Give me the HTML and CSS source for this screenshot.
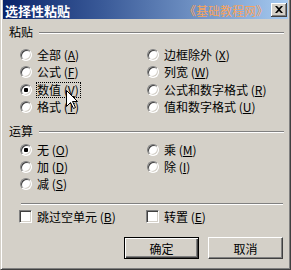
FILE: index.html
```html
<!DOCTYPE html>
<html lang="zh-CN">
<head>
<meta charset="utf-8">
<title>选择性粘贴</title>
<link rel="stylesheet" href="styles.css">
</head>
<body>
<div class="window">
  <div class="titlebar">
    <span class="title">选择性粘贴</span>
    <span class="brand">《基础教程网》</span>
    <span class="close">
      <svg width="8" height="7" viewBox="0 0 8 7"><path d="M0 0h2l2 2 2-2h2L5 3.5 8 7H6L4 5 2 7H0l3-3.5z" fill="#000"/></svg>
    </span>
  </div>
  <div class="body">
    <div class="group-head"><span>粘贴</span><i class="etch"></i></div>
    <div class="opts paste">
      <div class="opt"><span class="radio"></span><span class="lbl">全部 (<u>A</u>)</span></div>
      <div class="opt"><span class="radio"></span><span class="lbl">边框除外 (<u>X</u>)</span></div>
      <div class="opt"><span class="radio"></span><span class="lbl">公式 (<u>F</u>)</span></div>
      <div class="opt"><span class="radio"></span><span class="lbl">列宽 (<u>W</u>)</span></div>
      <div class="opt"><span class="radio checked"></span><span class="lbl focus">数值 (<u>V</u>)</span></div>
      <div class="opt"><span class="radio"></span><span class="lbl">公式和数字格式 (<u>R</u>)</span></div>
      <div class="opt"><span class="radio"></span><span class="lbl">格式 (<u>T</u>)</span></div>
      <div class="opt"><span class="radio"></span><span class="lbl">值和数字格式 (<u>U</u>)</span></div>
    </div>
    <div class="group-head second"><span>运算</span><i class="etch"></i></div>
    <div class="opts ops">
      <div class="opt"><span class="radio checked"></span><span class="lbl">无 (<u>O</u>)</span></div>
      <div class="opt"><span class="radio"></span><span class="lbl">乘 (<u>M</u>)</span></div>
      <div class="opt"><span class="radio"></span><span class="lbl">加 (<u>D</u>)</span></div>
      <div class="opt"><span class="radio"></span><span class="lbl">除 (<u>I</u>)</span></div>
      <div class="opt"><span class="radio"></span><span class="lbl">减 (<u>S</u>)</span></div>
    </div>
    <div class="rule"></div>
    <div class="checks">
      <div class="opt chk"><span class="checkbox"></span><span class="lbl">跳过空单元 (<u>B</u>)</span></div>
      <div class="opt chk"><span class="checkbox"></span><span class="lbl">转置 (<u>E</u>)</span></div>
    </div>
    <div class="buttons">
      <button class="btn default">确定</button>
      <button class="btn">取消</button>
    </div>
  </div>
  <svg class="cursor" width="12" height="19" viewBox="0 0 12 19"><polygon points="0.5,0.5 0.5,16.5 4.5,12.5 7.5,18.5 9.5,17.5 6.5,11.5 11.5,11.5" fill="#fff" stroke="#000" stroke-width="1"/></svg>
</div>
</body>
</html>
```

FILE: styles.css
```css
* { box-sizing: border-box; }
html, body { margin: 0; padding: 0; }
body {
  width: 291px;
  height: 270px;
  overflow: hidden;
  background: #d4d0c8;
  font-family: "Noto Sans CJK SC", "Noto Sans", sans-serif;
  font-size: 12px;
  color: #000;
}
.window {
  position: relative;
  width: 291px;
  height: 270px;
  background: #d4d0c8;
  border-style: solid;
  border-width: 0 1px 1px 1px;
  border-color: #d4d0c8 #404040 #404040 #d4d0c8;
  box-shadow: inset 1px 0 #fff, inset -1px -1px #808080;
  padding: 0 2px 2px 2px;
  display: flex;
  flex-direction: column;
}
.titlebar {
  height: 19px;
  flex: none;
  display: flex;
  align-items: center;
  background: linear-gradient(to right, #0a246a 0%, #3a5a98 35%, #a6caf0 100%);
}
.title {
  color: #fff;
  font-weight: bold;
  font-size: 13px;
  line-height: 15px;
  padding-left: 2px;
  margin-top: 2px;
}
.brand {
  margin-left: auto;
  margin-right: 3px;
  margin-top: 2px;
  color: #f7a35c;
  font-size: 12px;
  line-height: 14px;
}
.close {
  align-self: flex-start;
  margin-top: 3px;
  margin-right: 1px;
  width: 16px;
  height: 14px;
  background: #d4d0c8;
  box-shadow: inset -1px -1px #404040, inset 1px 1px #fff, inset -2px -2px #808080;
  display: flex;
  align-items: center;
  justify-content: center;
  padding-bottom: 1px;
}
.close svg { display: block; }
.body {
  flex: 1;
  display: flex;
  flex-direction: column;
}
.group-head {
  display: flex;
  align-items: center;
  height: 14px;
  margin-top: 6px;
  padding-left: 6px;
}
.group-head.second { margin-top: 8px; }
.group-head span { line-height: 14px; }
.etch {
  flex: 1;
  height: 2px;
  border-top: 1px solid #808080;
  border-bottom: 1px solid #fff;
  margin-left: 6px;
  margin-right: 4px;
  margin-top: 2px;
}
.opts {
  display: grid;
  grid-template-columns: 127px 1fr;
  padding-left: 17px;
}
.paste { margin-top: 7px; grid-auto-rows: 17.5px; }
.ops { margin-top: 3.75px; grid-auto-rows: 16.75px; }
.opt {
  display: flex;
  align-items: center;
  gap: 5px;
  white-space: nowrap;
}
.lbl { line-height: 14px; }
.lbl.focus {
  border: 1px dotted #000;
  margin: -1px -1px -1px -1px;
  padding: 0 1px 0 0;
}
.radio {
  position: relative;
  flex: none;
  width: 12px;
  height: 12px;
  border-radius: 50%;
  background: #fff;
  border: 1px solid;
  border-color: #808080 #fff #fff #808080;
  box-shadow: inset 1px 1px #404040, inset -1px -1px #d4d0c8;
}
.radio.checked::after {
  content: "";
  position: absolute;
  left: 3px;
  top: 3px;
  width: 4px;
  height: 4px;
  border-radius: 1px;
  background: #000;
}
.rule {
  height: 2px;
  border-top: 1px solid #808080;
  border-bottom: 1px solid #fff;
  margin: 11px 5px 0 18px;
}
.checks {
  display: grid;
  grid-template-columns: 127px 1fr;
  padding-left: 16px;
  margin-top: 3px;
  height: 17px;
}
.checkbox {
  flex: none;
  width: 13px;
  height: 13px;
  background: #fff;
  border: 1px solid;
  border-color: #808080 #fff #fff #808080;
  box-shadow: inset 1px 1px #404040, inset -1px -1px #d4d0c8;
}
.buttons {
  display: flex;
  justify-content: flex-end;
  gap: 9px;
  margin-top: 12px;
  padding-right: 5px;
}
.btn {
  width: 75px;
  height: 22px;
  padding: 0;
  margin: 0;
  font-family: inherit;
  font-size: 12px;
  color: #000;
  background: #d4d0c8;
  border: 1px solid;
  border-color: #fff #404040 #404040 #fff;
  box-shadow: inset -1px -1px #808080;
  border-radius: 0;
}
.btn.default {
  border-color: #000;
  box-shadow: inset 1px 1px #fff, inset -1px -1px #404040, inset -2px -2px #808080;
}
.cursor {
  position: absolute;
  left: 65px;
  top: 90px;
  display: block;
}
```
